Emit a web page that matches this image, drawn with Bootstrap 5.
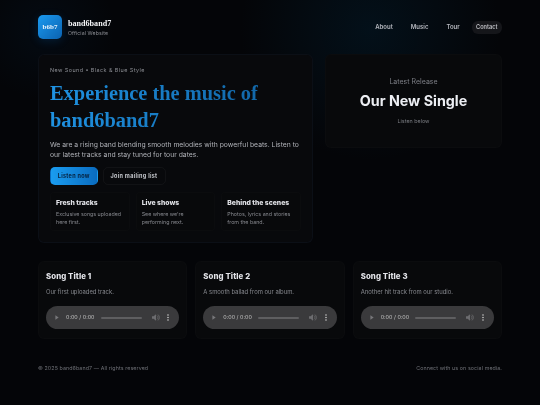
<!DOCTYPE html>
<html lang="en">
<head>
    <meta charset="UTF-8">
    <meta name="viewport" content="width=device-width, initial-scale=1.0">
    <title>band6band7</title>
    <link href="https://cdn.jsdelivr.net/npm/bootstrap@5.3.0/dist/css/bootstrap.min.css" rel="stylesheet">
    <style>
        body {
            height: 405px;
            overflow: hidden;
            font-family: Inter, "Liberation Sans", sans-serif;
            color: #e6e8ee;
            background-color: #040508;
            background-image:
                radial-gradient(circle 130px at 370px 30px, rgba(0,60,95,0.2), transparent),
                radial-gradient(circle 70px at 45px 30px, rgba(0,60,110,0.1), transparent);
        }
        .page-wrap {
            width: 464px;
            margin: 0 auto;
            padding-top: 15px;
            will-change: transform;
        }
        .site-head {
            height: 24px;
            margin-bottom: 15px;
        }
        .brand-gap { gap: 6px; }
        .logo-box {
            width: 24px;
            height: 24px;
            border-radius: 5px;
            background: linear-gradient(135deg, #1a9af0, #0b62b0);
            color: #e8f3fc;
            font: bold 7px "Liberation Serif", serif;
            box-shadow: 0 2px 10px rgba(10,110,200,0.2);
        }
        .brand-name {
            font: bold 8.1px/11px "Liberation Serif", serif;
            color: #f3f4f7;
        }
        .brand-sub {
            font-size: 5.2px;
            line-height: 7px;
            letter-spacing: 0.1px;
            color: #8c8e94;
            margin-top: 1px;
        }
        .nav-gap { gap: 18px; }
        .nav-gap .nav-link {
            padding: 0 0 1px;
            font-size: 6px;
            font-weight: 600;
            color: #b6b8bf;
        }
        .nav-gap .nav-link.pill-link {
            padding: 3px 4.5px;
            margin-left: -6px;
            border-radius: 6px;
            background: #15161a;
            font-size: 5.6px;
            line-height: 7px;
            color: #c0c1c6;
        }
        .panel-dark {
            background: #08090b;
            border: 1px solid rgba(255,255,255,0.015);
            border-radius: 6px;
        }
        .top-row {
            gap: 12px;
            margin-bottom: 18px;
        }
        .hero-panel {
            width: 275px;
            height: 189px;
            padding: 12px 11px;
            background: #08090c;
            border-color: rgba(40,70,120,0.1);
        }
        .eyebrow {
            font-size: 5.4px;
            line-height: 7px;
            letter-spacing: 0.45px;
            color: #8c8e94;
        }
        .hero-title {
            font: bold 20.4px/27px "Liberation Serif", serif;
            margin: 6px 0 6px;
            color: #1a84cc;
            background: linear-gradient(90deg, #1f92e2, #0f5f9e);
            -webkit-background-clip: text;
            background-clip: text;
            -webkit-text-fill-color: transparent;
        }
        .hero-text {
            font-size: 6.8px;
            line-height: 10.4px;
            color: #b0b2b8;
            margin-bottom: 6px;
        }
        .btn-listen, .btn-join {
            height: 18px;
            padding: 0;
            font-size: 5.5px;
            font-weight: 700;
            letter-spacing: 0.3px;
            border-radius: 5px;
            line-height: 16px;
            white-space: nowrap;
        }
        .btn-listen {
            width: 47.5px;
            background: linear-gradient(90deg, #1a9cf0, #0a6cc0);
            border: 1px solid transparent;
            color: #06213d;
        }
        .btn-join {
            width: 63px;
            background: transparent;
            border: 1px solid rgba(255,255,255,0.04);
            color: #c5c7cd;
        }
        .btn-gap { gap: 5px; }
        .mini-grid {
            display: grid;
            grid-template-columns: repeat(3, 1fr);
            gap: 6px;
            margin-top: 7px;
        }
        .mini-box {
            height: 39px;
            padding: 5px;
            border-radius: 4px;
        }
        .mini-title {
            font-size: 6.8px;
            font-weight: 800;
            line-height: 9px;
            color: #e2e3e8;
            margin-bottom: 3px;
        }
        .mini-text {
            font-size: 5.3px;
            line-height: 8px;
            color: #87898f;
        }
        .release-panel {
            width: 177px;
            height: 94px;
            padding-top: 21.5px;
        }
        .release-kicker {
            font-size: 7px;
            line-height: 9px;
            color: #7d7f86;
        }
        .release-title {
            font-size: 14.3px;
            font-weight: 700;
            line-height: 18px;
            color: #eceef3;
            margin: 6px 0 7.5px;
        }
        .release-note {
            font-size: 5.4px;
            line-height: 8px;
            color: #7a7c82;
        }
        .song-grid {
            display: grid;
            grid-template-columns: repeat(3, 1fr);
            gap: 8px;
        }
        .song-panel {
            height: 78px;
            padding: 9px 7px;
        }
        .song-name {
            font-size: 7.8px;
            font-weight: 800;
            line-height: 10px;
            letter-spacing: 0.1px;
            color: #e2e3e8;
            margin-bottom: 7px;
        }
        .song-desc {
            font-size: 5.9px;
            line-height: 8px;
            color: #87898f;
            margin-bottom: 10px;
        }
        .player-bar {
            height: 23px;
            padding: 0 10px 0 9px;
            border-radius: 12px;
            background: #3a3a3c;
            font-size: 5.4px;
            color: #c0c0c0;
        }
        .play-icon { margin-right: 7px; }
        .play-track {
            width: 41px;
            height: 2px;
            margin: 0 10px 0 6px;
            border-radius: 1px;
            background: #5e5e60;
        }
        .dots-icon { margin-left: auto; }
        .site-foot {
            margin-top: 25px;
            font-size: 5.3px;
            line-height: 8px;
            letter-spacing: 0.1px;
            color: #6f7177;
        }
    </style>
</head>
<body>
    <div class="page-wrap">
        <header class="site-head d-flex justify-content-between align-items-center">
            <div class="d-flex align-items-center brand-gap">
                <div class="logo-box d-flex align-items-center justify-content-center">b6b7</div>
                <div>
                    <div class="brand-name">band6band7</div>
                    <div class="brand-sub">Official Website</div>
                </div>
            </div>
            <ul class="nav nav-gap align-items-center">
                <li class="nav-item"><a class="nav-link" href="#">About</a></li>
                <li class="nav-item"><a class="nav-link" href="#">Music</a></li>
                <li class="nav-item"><a class="nav-link" href="#">Tour</a></li>
                <li class="nav-item"><a class="nav-link pill-link" href="#">Contact</a></li>
            </ul>
        </header>

        <div class="top-row d-flex align-items-start">
            <section class="hero-panel panel-dark">
                <div class="eyebrow">New Sound • Black &amp; Blue Style</div>
                <h1 class="hero-title">Experience the music of band6band7</h1>
                <p class="hero-text">We are a rising band blending smooth melodies with powerful beats. Listen to our latest tracks and stay tuned for tour dates.</p>
                <div class="d-flex btn-gap">
                    <button class="btn btn-listen" type="button">Listen now</button>
                    <button class="btn btn-join" type="button">Join mailing list</button>
                </div>
                <div class="mini-grid">
                    <div class="mini-box panel-dark">
                        <div class="mini-title">Fresh tracks</div>
                        <div class="mini-text">Exclusive songs uploaded here first.</div>
                    </div>
                    <div class="mini-box panel-dark">
                        <div class="mini-title">Live shows</div>
                        <div class="mini-text">See where we're performing next.</div>
                    </div>
                    <div class="mini-box panel-dark">
                        <div class="mini-title">Behind the scenes</div>
                        <div class="mini-text">Photos, lyrics and stories from the band.</div>
                    </div>
                </div>
            </section>
            <aside class="release-panel panel-dark text-center">
                <div class="release-kicker">Latest Release</div>
                <div class="release-title">Our New Single</div>
                <div class="release-note">Listen below</div>
            </aside>
        </div>

        <div class="song-grid" id="songs"></div>

        <footer class="site-foot d-flex justify-content-between">
            <span>© 2025 band6band7 — All rights reserved</span>
            <span>Connect with us on social media.</span>
        </footer>
    </div>

    <script>
        const songs = [
            ['Song Title 1', 'Our first uploaded track.'],
            ['Song Title 2', 'A smooth ballad from our album.'],
            ['Song Title 3', 'Another hit track from our studio.']
        ];
        const player = `
            <div class="player-bar d-flex align-items-center">
                <svg width="4" height="5" viewBox="0 0 5 6" class="play-icon"><path d="M0.5 0.3 4.6 3 0.5 5.7z" fill="#77777a"/></svg>
                <span>0:00 / 0:00</span>
                <div class="play-track"></div>
                <svg width="8" height="7" viewBox="0 0 8 7"><path d="M0 2.2h1.6L4 .3v6.4L1.6 4.8H0z" fill="#6c6c6f"/><path d="M5 1.6a2.4 2.4 0 0 1 0 3.8M6 .6a3.8 3.8 0 0 1 0 5.8" fill="none" stroke="#6c6c6f" stroke-width=".8"/></svg>
                <svg width="2" height="7" viewBox="0 0 2 7" class="dots-icon"><circle cx="1" cy="1" r=".8" fill="#c8c8c8"/><circle cx="1" cy="3.5" r=".8" fill="#c8c8c8"/><circle cx="1" cy="6" r=".8" fill="#c8c8c8"/></svg>
            </div>`;
        document.getElementById('songs').innerHTML = songs.map(s => `
            <div class="song-panel panel-dark">
                <div class="song-name">${s[0]}</div>
                <div class="song-desc">${s[1]}</div>
                ${player}
            </div>`).join('');
    </script>
    <script src="https://cdn.jsdelivr.net/npm/bootstrap@5.3.0/dist/js/bootstrap.bundle.min.js"></script>
</body>
</html>
